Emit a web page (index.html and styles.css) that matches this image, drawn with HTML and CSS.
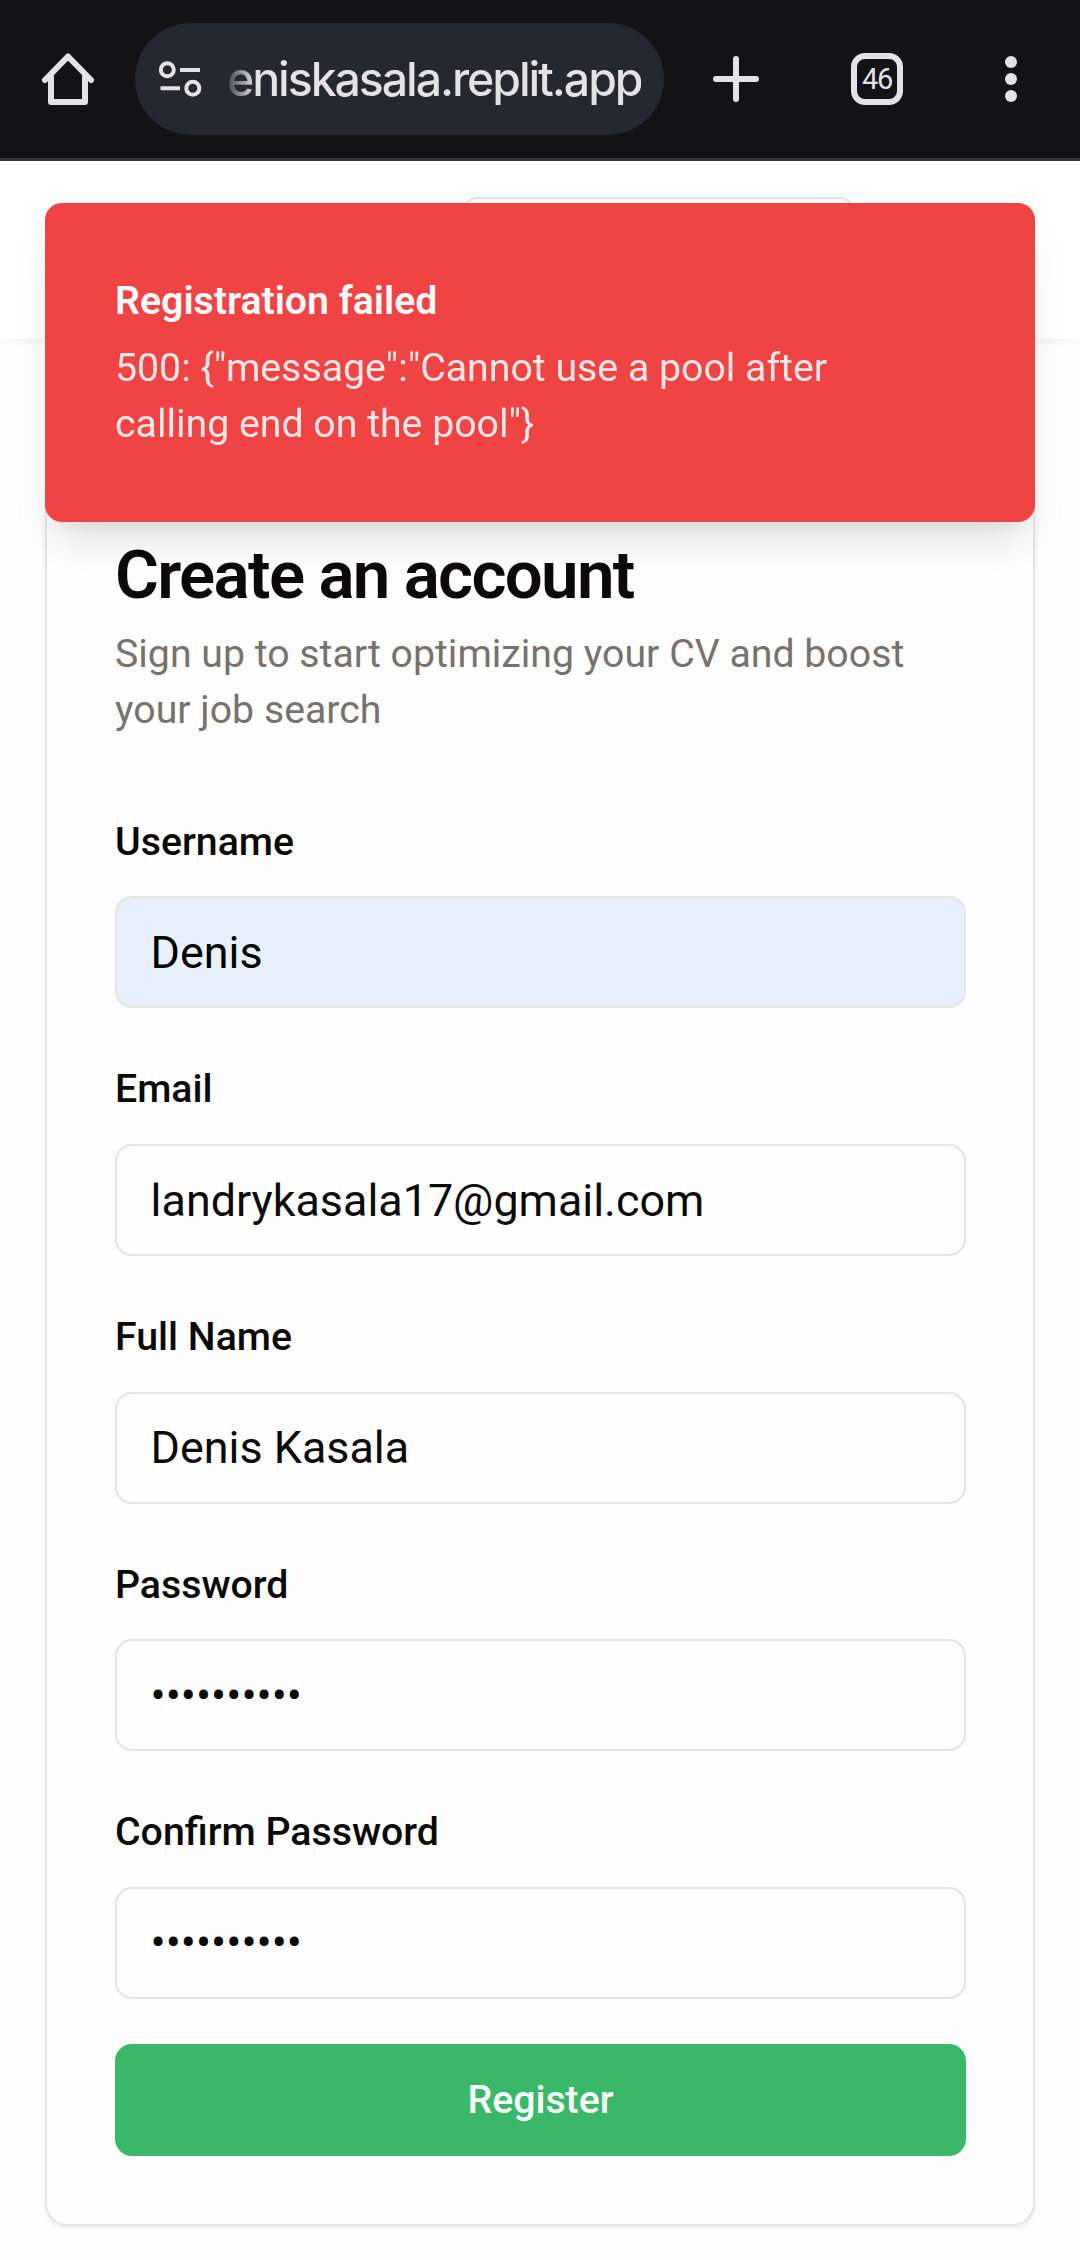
FILE: index.html
```html
<!DOCTYPE html>
<html lang="en">
<head>
<meta charset="utf-8">
<title>Create an account</title>
<link rel="stylesheet" href="styles.css">
</head>
<body>
<div class="browser-bar">
  <svg class="home" viewBox="0 0 54 54" fill="none" stroke="#e3e2e6" stroke-width="6" stroke-linejoin="round" stroke-linecap="round"><path d="M4 28 27 4.500 50 28"/><path d="M10 25V50H44V25"/></svg>
  <div class="address">
    <svg class="tune" viewBox="0 0 44 40" fill="none" stroke="#e3e2e6" stroke-width="4"><circle cx="9.300" cy="10.700" r="6.500"/><path d="M22 11H42M2.500 29.300H22"/><circle cx="34.800" cy="29.300" r="6.500"/></svg>
    <span class="url">eniskasala.replit.app</span>
  </div>
  <svg class="plus" viewBox="0 0 52 52" stroke="#e3e2e6" stroke-width="6" stroke-linecap="round"><path d="M26 6V46M6 26H46"/></svg>
  <div class="tabs">46</div>
  <svg class="dots" viewBox="0 0 12 48" fill="#e3e2e6"><circle cx="6" cy="7" r="6"/><circle cx="6" cy="24" r="6"/><circle cx="6" cy="41" r="6"/></svg>
</div>
<header class="site-header"><div class="select"></div></header>
<main class="page">
  <section class="card">
    <h1 class="title">Create an account</h1>
    <p class="subtitle">Sign up to start optimizing your CV and boost your job search</p>
    <div class="form">
      <div class="field"><div class="label">Username</div><div class="input autofilled">Denis</div></div>
      <div class="field"><div class="label">Email</div><div class="input">landrykasala17@gmail.com</div></div>
      <div class="field"><div class="label">Full Name</div><div class="input">Denis Kasala</div></div>
      <div class="field"><div class="label">Password</div><div class="input">••••••••••</div></div>
      <div class="field"><div class="label">Confirm Password</div><div class="input">••••••••••</div></div>
      <button class="submit" type="button">Register</button>
    </div>
  </section>
</main>
<div class="toast" role="alert">
  <div class="toast-title">Registration failed</div>
  <div class="toast-text">500: {"message":"Cannot use a pool after calling end on the pool"}</div>
</div>
</body>
</html>
```

FILE: styles.css
```css
* { box-sizing: border-box; }

body {
  margin: 0;
  height: 2260px;
  overflow: hidden;
  background: #fefefe;
  color: #0c0a09;
  font-family: Roboto, "Liberation Sans", sans-serif;
  font-size: 39.25px;
  line-height: 56px;
}

.browser-bar {
  display: flex;
  align-items: center;
  height: 161px;
  padding-left: 41px;
  border-bottom: 3px solid #35353a;
  background: #121317;
}

.browser-bar svg { display: block; flex: none; }

.home { width: 54px; height: 54px; }

.address {
  display: flex;
  align-items: center;
  width: 529px;
  height: 112px;
  margin-left: 40px;
  padding-left: 23px;
  border-radius: 56px;
  background: #242830;
}

.tune { width: 44px; height: 40px; }

.url {
  margin-left: 25px;
  font: 500 46.5px/56px Inter, sans-serif;
  letter-spacing: -2.1px;
  white-space: nowrap;
  color: transparent;
  background: linear-gradient(90deg, #40444b 0, #e3e2e6 28px);
  -webkit-background-clip: text;
  background-clip: text;
}

.plus { width: 52px; height: 52px; margin-left: 46px; }

.tabs {
  display: flex;
  align-items: center;
  justify-content: center;
  width: 52px;
  height: 52px;
  margin-left: 89px;
  border: 6px solid #e3e2e6;
  border-radius: 14px;
  color: #e3e2e6;
  font-size: 29px;
  letter-spacing: -1.2px;
  line-height: 40px;
}

.dots { width: 12px; height: 48px; margin-left: 102px; }

.site-header {
  display: flex;
  align-items: center;
  justify-content: flex-end;
  height: 178px;
  padding-right: 224px;
  background: #fff;
  box-shadow: 0 2.8px 5.6px rgba(0, 0, 0, .05);
}

.select {
  width: 395px;
  height: 106px;
  border: 2px solid #e2e2e2;
  border-radius: 17px;
}

.page { padding: 132px 45px 0; }

.card {
  height: 1754.5px;
  padding: 68.5px 67px 67px 68px;
  border: 2px solid #e5e5e5;
  border-radius: 22.4px;
  background: #fefefe;
  box-shadow: 0 2.8px 5.6px rgba(0, 0, 0, .05);
}

.title {
  margin: 0;
  font-size: 67.2px;
  font-weight: 600;
  line-height: 67.2px;
  letter-spacing: -1.68px;
}

.subtitle {
  margin: 17px 0 0;
  color: #78716c;
}

.form {
  display: flex;
  flex-direction: column;
  gap: 45px;
  margin-top: 68.2px;
}

.label {
  height: 90.6px;
  padding-top: 8px;
  font-weight: 500;
}

.input {
  display: flex;
  align-items: center;
  height: 112px;
  padding: 1px 0 0 33.6px;
  border: 2px solid #e5e5e5;
  border-radius: 17px;
  font-size: 44.85px;
}

.autofilled { background: #e8f0fe; color: #000; }

.submit {
  height: 112px;
  padding: 1px 0 0;
  border: 0;
  border-radius: 17px;
  background: #39b967;
  color: #fafaff;
  font: inherit;
  font-weight: 500;
}

.toast {
  position: absolute;
  top: 203px;
  left: 45px;
  width: 990px;
  height: 319px;
  padding: 70px 150px 68px 70px;
  border-radius: 17px;
  background: #f04444;
  color: #fafaf9;
  box-shadow: 0 28px 42px -8.4px rgba(0, 0, 0, .1), 0 11.2px 16.8px -11.2px rgba(0, 0, 0, .1);
}

.toast-title { font-weight: 600; }

.toast-text { margin-top: 11px; opacity: .9; }
```
